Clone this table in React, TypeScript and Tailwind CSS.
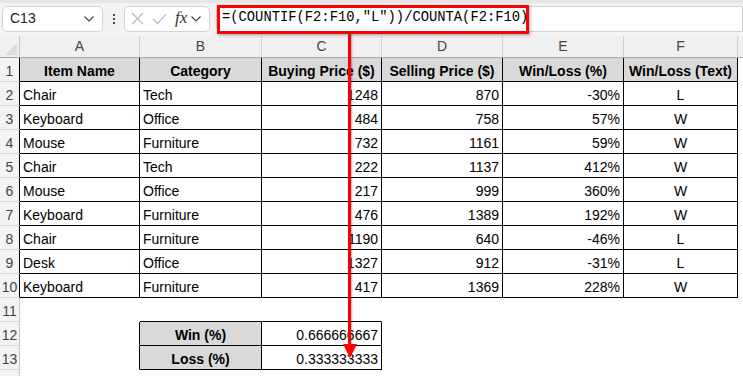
import React from 'react';

type Align = 'left' | 'right' | 'center';

const cols = [120, 122, 120, 121, 121, 114];
const letters = ['A', 'B', 'C', 'D', 'E', 'F'];

const data: [string, string, number, number, string, string][] = [
  ['Chair', 'Tech', 1248, 870, '-30%', 'L'],
  ['Keyboard', 'Office', 484, 758, '57%', 'W'],
  ['Mouse', 'Furniture', 732, 1161, '59%', 'W'],
  ['Chair', 'Tech', 222, 1137, '412%', 'W'],
  ['Mouse', 'Office', 217, 999, '360%', 'W'],
  ['Keyboard', 'Furniture', 476, 1389, '192%', 'W'],
  ['Chair', 'Furniture', 1190, 640, '-46%', 'L'],
  ['Desk', 'Office', 1327, 912, '-31%', 'L'],
  ['Keyboard', 'Furniture', 417, 1369, '228%', 'W'],
];

const alignCls: Record<Align, string> = {
  left: 'justify-start pl-[3px]',
  right: 'justify-end pr-[3px]',
  center: 'justify-center',
};

interface CellProps {
  w: number;
  text?: string | number;
  align?: Align;
  bold?: boolean;
  shade?: boolean;
  right?: boolean;
  bottom?: boolean;
}

const Cell: React.FC<CellProps> = ({ w, text, align = 'left', bold, shade, right, bottom }) => (
  <div
    style={{ width: w }}
    className={`h-full shrink-0 flex items-end pb-[2px] leading-[16px] overflow-visible whitespace-nowrap border-r border-b ${
      right ? 'border-r-black' : 'border-r-transparent'
    } ${bottom ? 'border-b-black' : 'border-b-transparent'} ${shade ? 'bg-[#d9d9d9]' : 'bg-white'} ${
      bold ? 'font-bold' : ''
    } ${alignCls[align]}`}
  >
    {text}
  </div>
);

const RowHead: React.FC<{ n?: number; dark?: boolean }> = ({ n, dark }) => (
  <div
    className={`w-[20px] h-full shrink-0 flex items-end justify-center pb-[2px] leading-[16px] bg-[#f3f3f3] text-[#444] text-[14px] border-r border-b border-b-[#d6d6d6] ${
      dark ? 'border-r-black' : 'border-r-[#c6c6c6]'
    }`}
  >
    {n}
  </div>
);

function Chevron() {
  return (
    <svg width="12" height="8" viewBox="0 0 12 8" fill="none" stroke="#444" strokeWidth="1.2">
      <path d="M1.5 1.5 L6 6 L10.5 1.5" />
    </svg>
  );
}

export default function App() {
  const headers = ['Item Name', 'Category', 'Buying Price ($)', 'Selling Price ($)', 'Win/Loss (%)', 'Win/Loss (Text)'];

  return (
    <div className="relative w-[743px] h-[376px] overflow-hidden bg-white text-black text-[14px] font-['Liberation_Sans',Arial,sans-serif]">
      {/* formula bar */}
      <div className="h-[36px] bg-[#f3f3f3] border-t-[3px] border-t-[#e6e6e6] flex items-center gap-0 pl-[2px] pb-[2px]">
        <div className="w-[101px] h-[26px] bg-white border border-[#d2d2d2] rounded-[5px] flex items-center justify-between pl-[7px] pr-[7px] text-[14px] text-[#222]">
          <span>C13</span>
          <Chevron />
        </div>
        <div className="w-[21px] flex flex-col items-center gap-[2px]">
          <span className="w-[2px] h-[2px] bg-[#444]" />
          <span className="w-[2px] h-[2px] bg-[#444]" />
          <span className="w-[2px] h-[2px] bg-[#444]" />
        </div>
        <div className="w-[86px] h-[26px] bg-white border border-[#d2d2d2] rounded-[5px] flex items-center pl-[6px] gap-[8px]">
          <svg width="13" height="13" viewBox="0 0 13 13" stroke="#b8b8b8" strokeWidth="1.1">
            <path d="M1 1 L12 12 M12 1 L1 12" />
          </svg>
          <svg width="15" height="12" viewBox="0 0 15 12" fill="none" stroke="#b8b8b8" strokeWidth="1.1">
            <path d="M1 6 L5.5 10.5 L14 1.5" />
          </svg>
          <span className="font-['Liberation_Serif',serif] italic text-[17px] text-[#333] leading-none -mt-[2px]">fx</span>
          <div className="-ml-[5px]">
            <Chevron />
          </div>
        </div>
        <div className="ml-[6px] flex-1 h-[26px] bg-white border border-[#d2d2d2] rounded-l-[5px] flex items-center pl-[5px] font-['Liberation_Mono',monospace] text-[13.8px] text-black">
          =(COUNTIF(F2:F10,"L"))/COUNTA(F2:F10)
        </div>
      </div>

      {/* column headers */}
      <div className="h-[22px] flex bg-[#f0f0f0] border-b border-b-[#a8a8a8] text-[#444] text-[14px]">
        <div className="w-[20px] h-full shrink-0 border-r border-[#c6c6c6] relative">
          <svg className="absolute right-[2px] bottom-[2px]" width="12" height="12" viewBox="0 0 12 12">
            <path d="M12 0 L12 12 L0 12 Z" fill="#dcdcdc" />
          </svg>
        </div>
        {letters.map((l, i) => (
          <div
            key={l}
            style={{ width: cols[i] }}
            className="h-full shrink-0 flex items-center justify-center border-r border-[#d0d0d0]"
          >
            {l}
          </div>
        ))}
        <div className="flex-1" />
      </div>

      {/* row 1 headers */}
      <div className="h-[24px] flex">
        <RowHead n={1} dark />
        {headers.map((h, i) => (
          <Cell key={h} w={cols[i]} text={h} align="center" bold shade right bottom />
        ))}
      </div>

      {data.map((r, idx) => (
        <div key={idx} className="h-[24px] flex">
          <RowHead n={idx + 2} dark />
          <Cell w={cols[0]} text={r[0]} right bottom />
          <Cell w={cols[1]} text={r[1]} right bottom />
          <Cell w={cols[2]} text={r[2]} align="right" right bottom />
          <Cell w={cols[3]} text={r[3]} align="right" right bottom />
          <Cell w={cols[4]} text={r[4]} align="right" right bottom />
          <Cell w={cols[5]} text={r[5]} align="center" right bottom />
        </div>
      ))}

      {/* row 11 */}
      <div className="h-[24px] flex">
        <RowHead n={11} />
        <Cell w={cols[0]} />
        <Cell w={cols[1]} bottom />
        <Cell w={cols[2]} bottom />
      </div>

      {/* summary */}
      {[
        ['Win (%)', '0.666666667'],
        ['Loss (%)', '0.333333333'],
      ].map(([label, val], i) => (
        <div key={label} className="h-[24px] flex">
          <RowHead n={12 + i} />
          <Cell w={cols[0]} right />
          <Cell w={cols[1]} text={label} align="center" bold shade right bottom />
          <Cell w={cols[2]} text={val} align="right" right bottom />
        </div>
      ))}

      <div className="h-[24px] flex">
        <RowHead />
      </div>

      {/* annotation: red box and arrow */}
      <div className="absolute left-[217px] top-[5px] w-[312px] h-[29px] border-[3px] border-[#ff0000] shadow-[1px_1px_3px_rgba(0,0,0,0.35)]" />
      <div className="absolute left-[348px] top-[33px] w-[3px] h-[314px] bg-[#ff0000] shadow-[1px_1px_2px_rgba(0,0,0,0.3)]" />
      <svg className="absolute left-[342px] top-[343px]" width="16" height="16" viewBox="0 0 16 16">
        <path d="M1 1 L15 1 L8 15 Z" fill="#ff0000" />
      </svg>
    </div>
  );
}
